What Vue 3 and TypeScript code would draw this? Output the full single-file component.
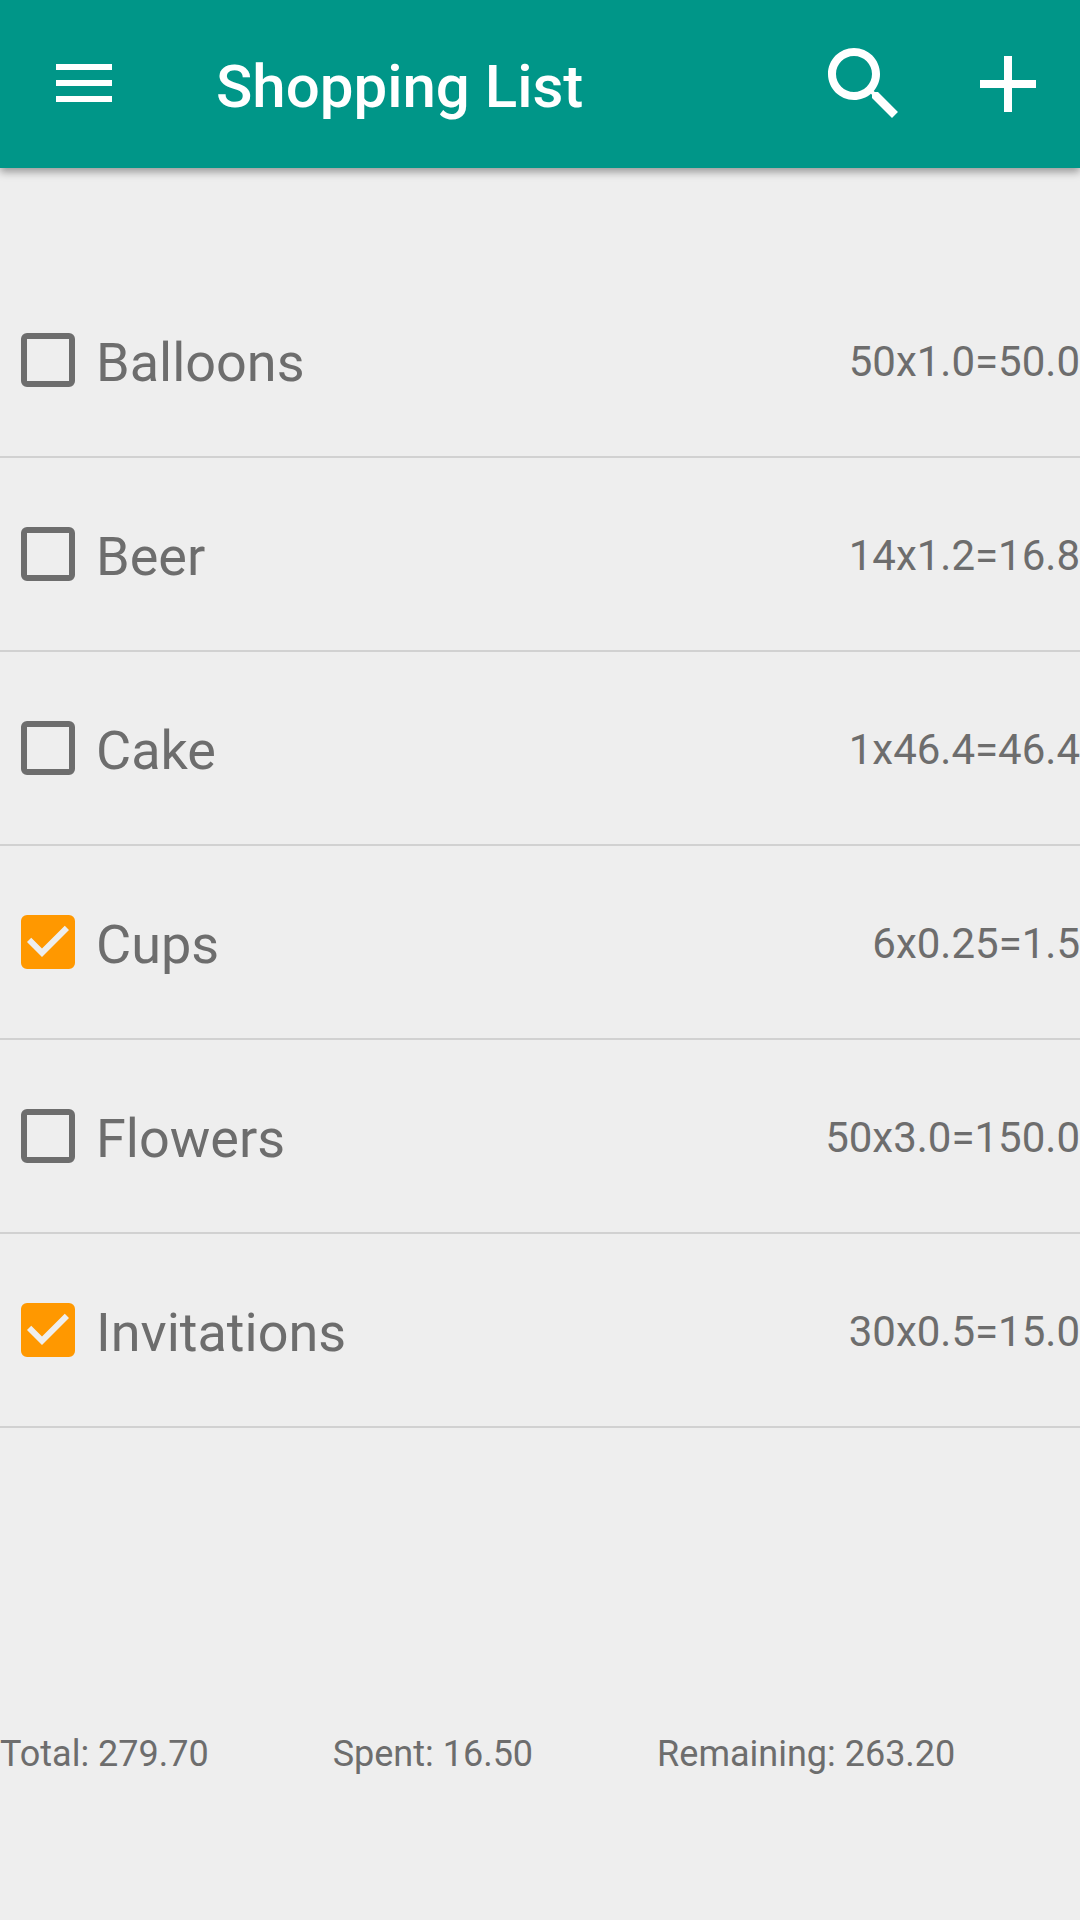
<script setup lang="ts">
import { computed, ref } from 'vue'

interface Item {
  id: string
  name: string
  detail: string
  cost: number
  bought: boolean
}

const items = ref<Item[]>([
  { id: 'balloons', name: 'Balloons', detail: '50x1.0=50.0', cost: 50, bought: false },
  { id: 'beer', name: 'Beer', detail: '14x1.2=16.8', cost: 16.8, bought: false },
  { id: 'cake', name: 'Cake', detail: '1x46.4=46.4', cost: 46.4, bought: false },
  { id: 'cups', name: 'Cups', detail: '6x0.25=1.5', cost: 1.5, bought: true },
  { id: 'flowers', name: 'Flowers', detail: '50x3.0=150.0', cost: 150, bought: false },
  { id: 'invitations', name: 'Invitations', detail: '30x0.5=15.0', cost: 15, bought: true },
])

const sum = (list: Item[]): number => list.reduce((acc, item) => acc + item.cost, 0)
const total = computed(() => sum(items.value))
const spent = computed(() => sum(items.value.filter((item) => item.bought)))
const remaining = computed(() => total.value - spent.value)
</script>

<template>
  <div class="page">
    <header class="app-bar">
      <button class="menu-button" type="button" aria-label="Open menu">
        <svg width="56" height="40" viewBox="0 0 56 40" fill="currentColor" aria-hidden="true">
          <path d="M0 0h56v6H0zM0 16h56v6H0zM0 32h56v6H0z" />
        </svg>
      </button>
      <h1 class="title">Shopping List</h1>
      <div class="actions">
        <button class="action" type="button" aria-label="Search">
          <svg width="96" height="96" viewBox="0 0 24 24" fill="currentColor" aria-hidden="true">
            <path
              d="M15.5 14h-.79l-.28-.27C15.41 12.59 16 11.11 16 9.5 16 5.91 13.09 3 9.5 3S3 5.91 3 9.5 5.91 16 9.5 16c1.61 0 3.09-.59 4.23-1.57l.27.28v.79l5 4.99L20.49 19l-4.99-5zm-6 0C7.01 14 5 11.99 5 9.5S7.01 5 9.5 5 14 7.01 14 9.5 11.99 14 9.5 14z"
            />
          </svg>
        </button>
        <button class="action" type="button" aria-label="Add item">
          <svg width="96" height="96" viewBox="0 0 24 24" fill="currentColor" aria-hidden="true">
            <path d="M19 13h-6v6h-2v-6H5v-2h6V5h2v6h6z" />
          </svg>
        </button>
      </div>
    </header>

    <main class="content">
      <ul class="list">
        <li v-for="item in items" :key="item.id" class="row">
          <label class="item" :for="item.id">
            <span class="check">
              <input :id="item.id" v-model="item.bought" class="box" type="checkbox" />
              <svg v-if="item.bought" class="tick" viewBox="3 3 18 18" aria-hidden="true">
                <path d="M10 17l-5-5 1.41-1.41L10 14.17l7.59-7.59L19 8z" />
              </svg>
            </span>
            <span class="name">{{ item.name }}</span>
          </label>
          <span class="detail">{{ item.detail }}</span>
        </li>
      </ul>
    </main>

    <footer class="summary">
      <span>Total: {{ total.toFixed(2) }}</span>
      <span>Spent: {{ spent.toFixed(2) }}</span>
      <span>Remaining: {{ remaining.toFixed(2) }}</span>
    </footer>
  </div>
</template>

<style>
body {
  margin: 0;
  background: #eeeeee;
}
</style>

<style scoped>
.page {
  display: flex;
  flex-direction: column;
  box-sizing: border-box;
  min-height: 100vh;
  padding-bottom: 145px;
  background: #eeeeee;
  color: #6d6d6d;
  font-family: Roboto, "Liberation Sans", sans-serif;
}

.app-bar {
  display: flex;
  align-items: center;
  box-sizing: border-box;
  height: 168px;
  padding: 0 24px 0 56px;
  background: #009688;
  color: #ffffff;
  box-shadow: 0 4px 8px rgba(0, 0, 0, 0.36);
}

.menu-button,
.action {
  display: flex;
  padding: 0;
  border: 0;
  background: none;
  color: inherit;
  cursor: pointer;
}

.title {
  flex: 1;
  margin: 0 0 0 104px;
  padding-top: 5px;
  font-size: 60px;
  font-weight: 500;
  line-height: 70px;
}

.actions {
  display: flex;
  gap: 48px;
}

.content {
  flex: 1;
}

.list {
  margin: 0;
  padding: 96px 0 0;
  list-style: none;
}

.row {
  display: flex;
  align-items: center;
  justify-content: space-between;
  height: 192px;
  border-bottom: 2px solid #d1d1d1;
}

.item {
  display: flex;
  align-items: center;
  gap: 21px;
  padding-left: 21px;
  cursor: pointer;
}

.check {
  display: grid;
  width: 54px;
  height: 54px;
}

.box,
.tick {
  grid-area: 1 / 1;
  width: 54px;
  height: 54px;
}

.box {
  appearance: none;
  box-sizing: border-box;
  margin: 0;
  border: 6px solid #6d6d6d;
  border-radius: 6px;
}

.box:checked {
  border-color: #ff9800;
  background: #ff9800;
}

.tick {
  fill: #eeeeee;
  pointer-events: none;
}

.name {
  padding-top: 5px;
  font-size: 54px;
  line-height: 64px;
}

.detail {
  padding-top: 4px;
  font-size: 42px;
  line-height: 50px;
}

.summary {
  display: flex;
  gap: 124px;
  font-size: 36px;
  line-height: 42px;
}
</style>
